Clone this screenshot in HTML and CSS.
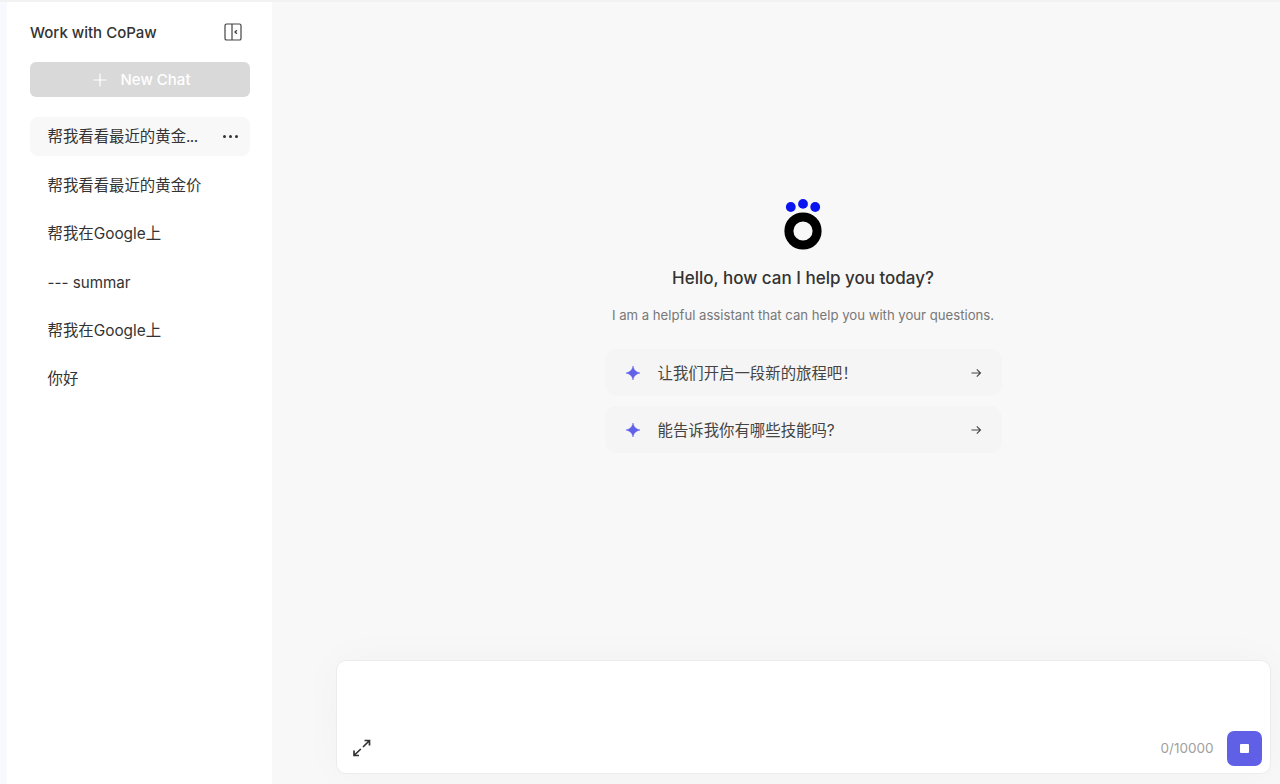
FILE: index.html
```html
<!DOCTYPE html>
<html lang="zh">
<head>
<meta charset="utf-8">
<title>Work with CoPaw</title>
<link rel="stylesheet" href="styles.css">
</head>
<body>
<div class="app">
  <div class="rail"></div>
  <aside class="sidebar">
    <header class="side-head">
      <span class="side-title">Work with CoPaw</span>
      <svg class="collapse" viewBox="0 0 18 18" width="18" height="18" fill="none" stroke="#444" stroke-width="1.2"><rect x="1" y="1" width="16" height="16" rx="1.6"/><path d="M8 1v16"/><path d="M12.9 7.2 11 9l1.9 1.8" stroke-width="1.4"/></svg>
    </header>
    <button class="new-chat">
      <svg viewBox="0 0 14 14" width="14" height="14" fill="none" stroke="#fff" stroke-width="1.2"><path d="M7 .5v13M.5 7h13"/></svg>
      <span>New Chat</span>
    </button>
    <nav class="chats">
      <div class="chat active"><span class="chat-label">帮我看看最近的黄金<span class="ell">...</span></span><span class="dots"><i></i><i></i><i></i></span></div>
      <div class="chat"><span class="chat-label">帮我看看最近的黄金价</span></div>
      <div class="chat"><span class="chat-label">帮我在Google上</span></div>
      <div class="chat latin"><span class="chat-label">--- summar</span></div>
      <div class="chat"><span class="chat-label">帮我在Google上</span></div>
      <div class="chat"><span class="chat-label">你好</span></div>
    </nav>
  </aside>
  <main class="main">
    <section class="welcome">
      <svg class="logo" viewBox="0 0 38 51" width="38" height="51">
        <circle cx="19" cy="32" r="14.1" fill="none" stroke="#000" stroke-width="9"/>
        <circle cx="6.8" cy="8" r="4.9" fill="#0a14f0"/>
        <circle cx="19" cy="4.9" r="4.9" fill="#0a14f0"/>
        <circle cx="31.2" cy="8" r="4.9" fill="#0a14f0"/>
      </svg>
      <h1 class="hello">Hello, how can I help you today?</h1>
      <p class="sub">I am a helpful assistant that can help you with your questions.</p>
      <div class="prompts">
        <div class="prompt">
          <svg class="spark" viewBox="0 0 14 14" width="14" height="14"><path d="M7 0C7.8 3.9 9.6 6 14 7 9.6 8 7.8 10.1 7 14 6.2 10.1 4.4 8 0 7 4.4 6 6.2 3.9 7 0Z" fill="#6060e8" stroke="#6060e8" stroke-width=".5" stroke-linejoin="round"/></svg>
          <span class="prompt-text">让我们开启一段新的旅程吧！</span>
          <svg class="arrow" viewBox="0 0 12 12" width="12" height="12" fill="none" stroke="#444" stroke-width="1.1"><path d="M1.5 6h9M6.8 2.3 10.5 6 6.8 9.7"/></svg>
        </div>
        <div class="prompt">
          <svg class="spark" viewBox="0 0 14 14" width="14" height="14"><path d="M7 0C7.8 3.9 9.6 6 14 7 9.6 8 7.8 10.1 7 14 6.2 10.1 4.4 8 0 7 4.4 6 6.2 3.9 7 0Z" fill="#6060e8" stroke="#6060e8" stroke-width=".5" stroke-linejoin="round"/></svg>
          <span class="prompt-text">能告诉我你有哪些技能吗?</span>
          <svg class="arrow" viewBox="0 0 12 12" width="12" height="12" fill="none" stroke="#444" stroke-width="1.1"><path d="M1.5 6h9M6.8 2.3 10.5 6 6.8 9.7"/></svg>
        </div>
      </div>
    </section>
    <section class="composer">
      <div class="composer-bar">
        <svg class="expand" viewBox="0 0 18 18" width="18" height="18" fill="none" stroke="#333" stroke-width="1.7"><path d="M11.500 1.500H16.500V6.500M16.500 1.500 10 8M1 11.500V16.500H6M1 16.500 7.800 10"/></svg>
        <div class="composer-right">
          <span class="count">0/10000</span>
          <button class="stop"><span class="stop-square"></span></button>
        </div>
      </div>
    </section>
  </main>
</div>
</body>
</html>
```

FILE: styles.css
```css
* { box-sizing: border-box; }
html, body { margin: 0; height: 100%; }
body {
  font-family: Inter, "Noto Sans CJK SC", "Liberation Sans", sans-serif;
  color: #333;
  overflow: hidden;
  background: #f8f8f8;
}
.app { display: flex; height: 784px; border-top: 2px solid #f2f2f2; }
.rail { width: 7px; background: #f8f8ff; flex: none; }
.sidebar {
  width: 265px;
  flex: none;
  background: #fff;
  padding: 0 22px 0 23px;
  display: flex;
  flex-direction: column;
}
.side-head {
  height: 60px;
  display: flex;
  align-items: center;
  justify-content: space-between;
  padding: 0 8.500px 0 0;
}
.side-title { font-size: 15px; font-weight: 500; color: #333; }
.collapse { display: block; }
.new-chat {
  height: 35px;
  border: 0;
  border-radius: 6px;
  background: #d9d9d9;
  color: #fff;
  font: 500 15px Inter, sans-serif;
  display: flex;
  align-items: center;
  justify-content: center;
  gap: 14px;
  padding: 0 0 0 3px;
}
.chats { margin-top: 20px; display: flex; flex-direction: column; gap: 9.400px; }
.chat {
  height: 39px;
  border-radius: 8px;
  padding: 0 12px 2.400px 17.500px;
  display: flex;
  align-items: center;
  justify-content: space-between;
  font-size: 15.4px;
  color: #333;
}
.chat.latin { padding-bottom: 0; padding-top: 2px; font-size: 15.2px; }
.chat.active { background: #f8f8f8; }
.ell { letter-spacing: -0.6px; }
.dots { display: flex; gap: 3px; padding-top: 2.400px; }
.dots i { width: 3px; height: 3px; border-radius: 50%; background: #333; }
.main {
  flex: 1;
  min-width: 0;
  display: flex;
  flex-direction: column;
  align-items: center;
  padding: 0 9.500px 10px 63.500px;
  background: #f8f8f8;
}
.welcome {
  flex: 1;
  width: 100%;
  display: flex;
  flex-direction: column;
  align-items: center;
  padding-top: 197px;
}
.logo { display: block; }
.hello { margin: 15px 0 0; font-size: 17px; line-height: 26px; font-weight: 500; color: #333; }
.sub { margin: 14px 0 0; font-size: 13.150px; line-height: 20px; color: #777; }
.prompts { margin-top: 24px; width: 397px; display: flex; flex-direction: column; gap: 10px; }
.prompt {
  height: 47px;
  border-radius: 12px;
  background: #f5f5f5;
  display: flex;
  align-items: center;
  padding: 0 20px 0 21.500px;
  font-size: 15.4px;
  color: #444;
}
.spark { flex: none; }
.prompt-text { margin-left: 17.500px; flex: 1; padding-bottom: 2px; }
.arrow { flex: none; }
.composer {
  width: 100%;
  height: 114px;
  background: #fff;
  border: 1px solid #ececec;
  border-radius: 10px;
  box-shadow: 0 0 40px rgba(0,0,0,.03);
  display: flex;
  flex-direction: column;
  justify-content: flex-end;
  padding: 0 7.500px 7px 16px;
}
.composer-bar { display: flex; align-items: center; justify-content: space-between; }
.expand { display: block; }
.composer-right { display: flex; align-items: center; gap: 13px; }
.count { font-size: 13.500px; color: #a0a0a0; }
.stop {
  width: 35.500px;
  height: 35.500px;
  border: 0;
  padding: 0;
  border-radius: 7px;
  background: #6060e6;
  display: flex;
  align-items: center;
  justify-content: center;
}
.stop-square { width: 9px; height: 9px; background: #fff; border-radius: 1px; }
```
